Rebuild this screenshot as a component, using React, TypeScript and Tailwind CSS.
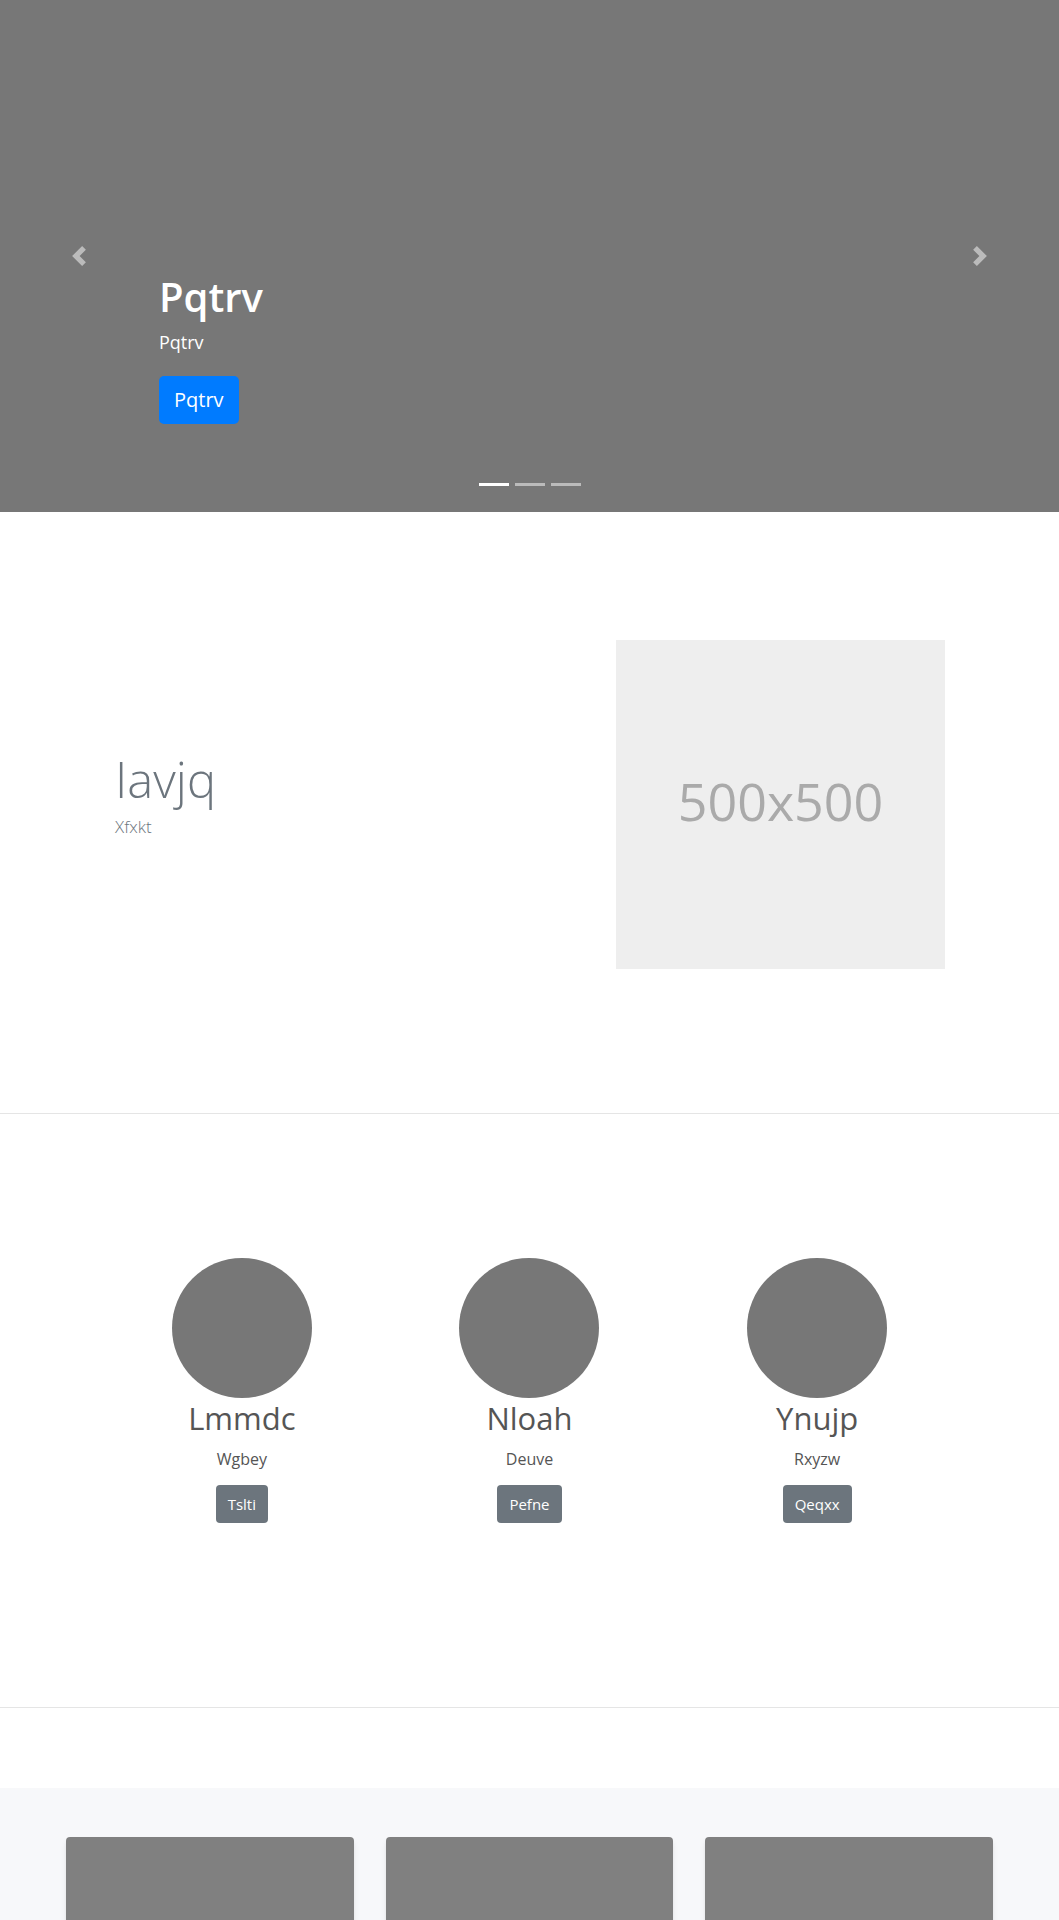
const PEOPLE = [
  { name: "Lmmdc", role: "Wgbey", action: "Tslti" },
  { name: "Nloah", role: "Deuve", action: "Pefne" },
  { name: "Ynujp", role: "Rxyzw", action: "Qeqxx" },
];

function Chevron({ dir }: { dir: "prev" | "next" }) {
  return (
    <svg width="20" height="20" viewBox="0 0 8 8" className="opacity-50" fill="#fff">
      {dir === "prev" ? (
        <path d="M5.25 0l-4 4 4 4 1.5-1.5L4.25 4l2.5-2.5L5.25 0z" />
      ) : (
        <path d="M2.75 0l-1.5 1.5L3.75 4l-2.5 2.5L2.75 8l4-4-4-4z" />
      )}
    </svg>
  );
}

function Hero() {
  return (
    <section className="relative h-[512px] bg-[#777777]">
      <div className="pl-[159px] pt-[273px] text-white">
        <h1 className="text-[40px] font-semibold leading-[48px] mb-2">Pqtrv</h1>
        <p className="text-[18px] leading-[27px] mb-[20px]">Pqtrv</p>
        <button className="h-[48px] rounded-[5px] bg-[#007bff] px-[15px] text-[20px] leading-[30px] text-white">
          Pqtrv
        </button>
      </div>

      <button className="absolute left-0 top-0 flex h-full w-[15%] items-center justify-center" aria-label="Previous">
        <Chevron dir="prev" />
      </button>
      <button className="absolute right-0 top-0 flex h-full w-[15%] items-center justify-center" aria-label="Next">
        <Chevron dir="next" />
      </button>

      <div className="absolute bottom-[26px] left-0 right-0 flex justify-center gap-[6px]">
        <span className="h-[3px] w-[30px] bg-white" />
        <span className="h-[3px] w-[30px] bg-white/50" />
        <span className="h-[3px] w-[30px] bg-white/50" />
      </div>
    </section>
  );
}

export default function App() {
  return (
    <div className="w-[1059px] bg-white font-['Open_Sans',sans-serif]">
      <Hero />

      <section className="flex items-center pl-[115px] pr-[114px] pt-[128px] pb-[144px]">
        <div className="flex-1 pb-[19px]">
          <h2 className="text-[49px] font-light leading-[50px] text-[#6c757d]">Iavjq</h2>
          <p className="mt-[13px] text-[17px] font-light leading-[20px] text-[#6c757d]">Xfxkt</p>
        </div>
        <div className="flex h-[329px] w-[329px] items-center justify-center bg-[#eeeeee] pb-2 text-[52px] text-[#aaaaaa]">
          500x500
        </div>
      </section>

      <hr className="border-t border-[#e5e5e5]" />

      <section className="pt-[144px] pb-[184px]">
        <div className="mx-auto grid w-[863px] grid-cols-3">
          {PEOPLE.map((p) => (
            <div key={p.name} className="flex flex-col items-center text-[#555555]">
              <div className="h-[140px] w-[140px] rounded-full bg-[#777777]" />
              <h3 className="mt-[1px] text-[31px] leading-[38px]">{p.name}</h3>
              <p className="mt-[10px] text-[16px] leading-[24px]">{p.role}</p>
              <button className="mt-[14px] h-[38px] rounded bg-[#6c757d] px-3 text-[15px] text-white">
                {p.action}
              </button>
            </div>
          ))}
        </div>
      </section>

      <hr className="border-t border-[#e5e5e5]" />

      <div className="h-[80px]" />

      <section className="bg-[#f7f8fa] px-[66px] pt-[49px] pb-12">
        <div className="grid grid-cols-3 gap-8">
          {[0, 1, 2].map((i) => (
            <div key={i} className="overflow-hidden rounded bg-white shadow-md">
              <div className="h-[220px] bg-[#808080]" />
              <div className="h-[120px]" />
            </div>
          ))}
        </div>
      </section>
    </div>
  );
}
